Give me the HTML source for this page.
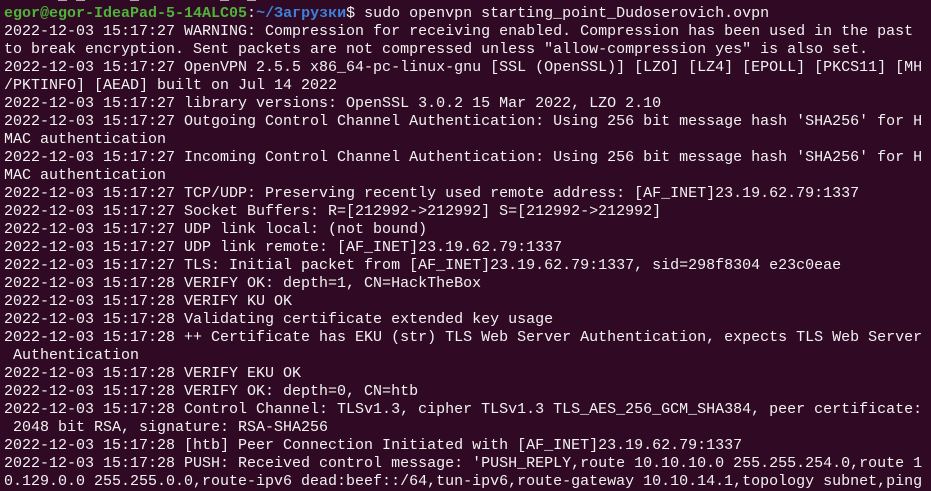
<!DOCTYPE html>
<html><head><meta charset="utf-8"><style>
html,body{margin:0;padding:0;background:#300a24;width:931px;height:478px;overflow:hidden}
pre{margin:0;position:absolute;left:4px;top:-13px;font-family:"Liberation Mono","DejaVu Sans Mono",monospace;font-size:15px;line-height:18px;color:#f2f2f2;white-space:pre}
.g{color:#4fb33a;font-weight:bold}.b{color:#3f80d8;font-weight:bold}
</style></head><body><pre>      _ _     _         _  _
<span class="g">egor@egor-IdeaPad-5-14ALC05</span>:<span class="b">~/Загрузки</span>$ sudo openvpn starting_point_Dudoserovich.ovpn
2022-12-03 15:17:27 WARNING: Compression for receiving enabled. Compression has been used in the past
to break encryption. Sent packets are not compressed unless "allow-compression yes" is also set.
2022-12-03 15:17:27 OpenVPN 2.5.5 x86_64-pc-linux-gnu [SSL (OpenSSL)] [LZO] [LZ4] [EPOLL] [PKCS11] [MH
/PKTINFO] [AEAD] built on Jul 14 2022
2022-12-03 15:17:27 library versions: OpenSSL 3.0.2 15 Mar 2022, LZO 2.10
2022-12-03 15:17:27 Outgoing Control Channel Authentication: Using 256 bit message hash 'SHA256' for H
MAC authentication
2022-12-03 15:17:27 Incoming Control Channel Authentication: Using 256 bit message hash 'SHA256' for H
MAC authentication
2022-12-03 15:17:27 TCP/UDP: Preserving recently used remote address: [AF_INET]23.19.62.79:1337
2022-12-03 15:17:27 Socket Buffers: R=[212992->212992] S=[212992->212992]
2022-12-03 15:17:27 UDP link local: (not bound)
2022-12-03 15:17:27 UDP link remote: [AF_INET]23.19.62.79:1337
2022-12-03 15:17:27 TLS: Initial packet from [AF_INET]23.19.62.79:1337, sid=298f8304 e23c0eae
2022-12-03 15:17:28 VERIFY OK: depth=1, CN=HackTheBox
2022-12-03 15:17:28 VERIFY KU OK
2022-12-03 15:17:28 Validating certificate extended key usage
2022-12-03 15:17:28 ++ Certificate has EKU (str) TLS Web Server Authentication, expects TLS Web Server
 Authentication
2022-12-03 15:17:28 VERIFY EKU OK
2022-12-03 15:17:28 VERIFY OK: depth=0, CN=htb
2022-12-03 15:17:28 Control Channel: TLSv1.3, cipher TLSv1.3 TLS_AES_256_GCM_SHA384, peer certificate:
 2048 bit RSA, signature: RSA-SHA256
2022-12-03 15:17:28 [htb] Peer Connection Initiated with [AF_INET]23.19.62.79:1337
2022-12-03 15:17:28 PUSH: Received control message: 'PUSH_REPLY,route 10.10.10.0 255.255.254.0,route 1
0.129.0.0 255.255.0.0,route-ipv6 dead:beef::/64,tun-ipv6,route-gateway 10.10.14.1,topology subnet,ping
</pre></body></html>
